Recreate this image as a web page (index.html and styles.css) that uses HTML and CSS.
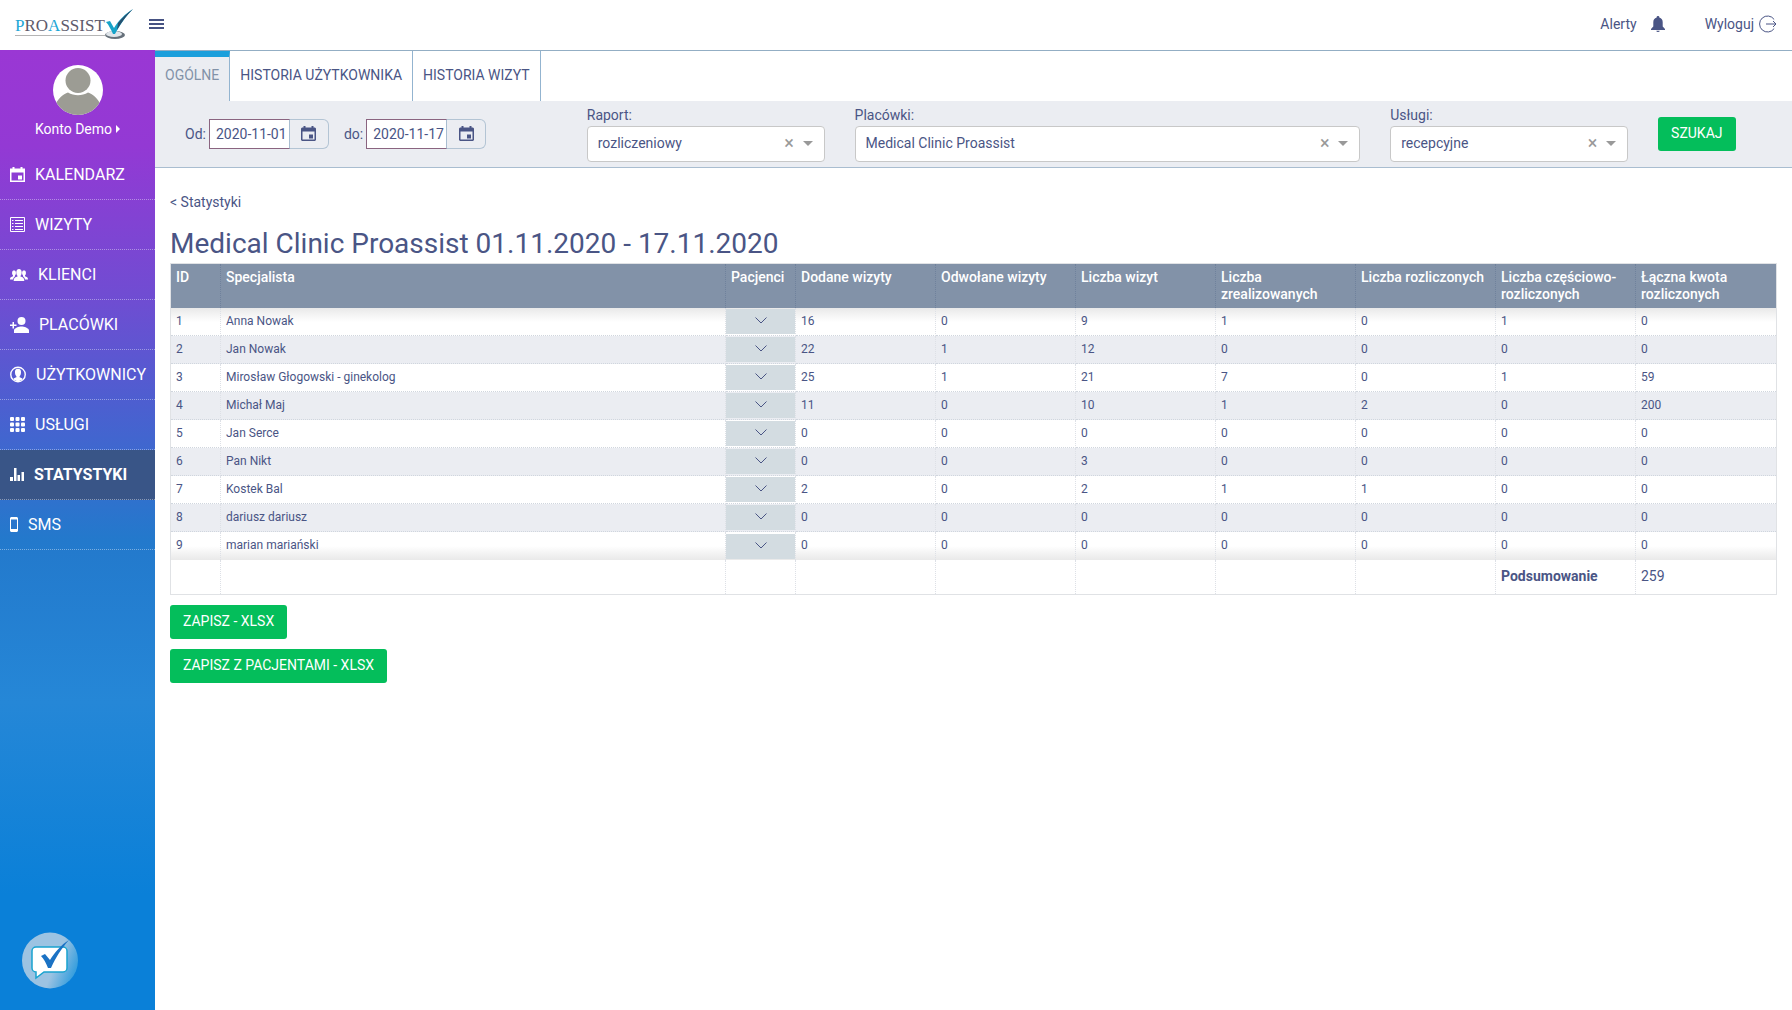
FILE: index.html
```html
<!DOCTYPE html>
<html lang="pl">
<head>
  <meta charset="UTF-8">
  <meta name="viewport" content="width=device-width, initial-scale=1.0">
  <title>Proassist - Statystyki</title>
  <link rel="stylesheet" href="styles.css">
</head>
<body>
  <header class="topbar">
    <a href="#" class="logo">
      <span class="logo-text"><span class="blue">P</span>RO<span class="blue">A</span>SSIST</span>
      <svg class="logo-mark" width="30" height="31" viewBox="0 0 30 31">
        <ellipse cx="11" cy="26" rx="10" ry="4" fill="#66707a"/>
        <ellipse cx="10" cy="25" rx="8" ry="3" fill="#dfe5ea"/>
        <path d="M2 13l4-1 4 7C15 11 21 5 29 0 21 8 16 16 11 25H9C7 21 5 16 2 13z" fill="#16a3c9"/>
        <path d="M14 14C18 9 23 4 29 0 22 7 17 14 13 21z" fill="#27506f"/>
      </svg>
    </a>
    <button class="menu-btn" aria-label="Menu"><span></span><span></span><span></span></button>
    <nav class="top-links">
      <a href="#">Alerty
        <svg class="bell" width="14" height="16" viewBox="0 0 14 16"><path d="M7 0a1.300 1.300 0 0 1 1.300 1.500C10.600 2 11.700 4 11.700 6.200V10.500L14 13v1H0v-1l2.300-2.500V6.200C2.300 4 3.400 2 5.700 1.500A1.300 1.300 0 0 1 7 0zM5.300 14.700h3.400a1.700 1.300 0 0 1-3.400 0z" fill="currentColor"/></svg>
      </a>
      <a href="#">Wyloguj
        <svg class="exit" width="18" height="18" viewBox="0 0 18 18" fill="none" stroke="currentColor"><path d="M15.200 4.500a8 8 0 1 0 0 9M7 9h10M14 6l3 3-3 3"/></svg>
      </a>
    </nav>
  </header>

  <div class="page">
    <aside class="sidebar">
      <div class="account">
        <svg width="50" height="50" viewBox="0 0 50 50">
          <clipPath id="face"><circle cx="25" cy="25" r="25"/></clipPath>
          <circle cx="25" cy="25" r="25" fill="#fff"/>
          <g clip-path="url(#face)" fill="#9c9c94"><circle cx="25" cy="15.500" r="12.500"/><path d="M2 40C5 34 10 29 15 27.500c6 3.500 14 3.500 20 0C40 29 45 34 48 40V50H2z"/></g>
        </svg>
        <button class="account-name">Konto Demo <svg width="4" height="8" viewBox="0 0 4 8"><path d="M0 0l4 4-4 4z" fill="#fff"/></svg></button>
      </div>
      <nav class="menu">
        <a href="#"><svg width="15" height="16" viewBox="0 0 15 16" fill="#fff"><path fill-rule="evenodd" d="M2.500 0h2v1.500h6V0h2v1.500H15V15H0V1.500h2.500zM1.500 5.500v8h12v-8z"/><path d="M8 8.500h4v4H8z"/></svg>KALENDARZ</a>
        <a href="#"><svg width="15" height="15" viewBox="0 0 15 15" fill="none" stroke="#fff"><path d="M.5.5h14v14H.5zM5 3.500h8M5 6.500h8M5 9.500h8M5 12.500h8M2 3.500h1.500M2 6.500h1.500M2 9.500h1.500M2 12.500h1.500"/></svg>WIZYTY</a>
        <a href="#"><svg width="18" height="12" viewBox="0 0 18 12" fill="#fff"><ellipse cx="9" cy="3.500" rx="2.700" ry="3.500"/><path d="M7.500 6h3v1.500c2 .8 3.800 1 3.800 4.500H3.700c0-3.500 1.800-3.700 3.800-4.500z"/><ellipse cx="4" cy="4" rx="2" ry="2.700"/><path d="M3 6h2v1.200L3.500 9 3 10.500H0C0 8 1.500 8 3 7.300z"/><ellipse cx="14" cy="4" rx="2" ry="2.700"/><path d="M15 6h-2v1.200L14.500 9l.5 1.500h3C18 8 16.500 8 15 7.300z"/></svg>KLIENCI</a>
        <a href="#"><svg width="19" height="16" viewBox="0 0 19 16" fill="#fff"><circle cx="11.500" cy="4" r="4"/><path d="M4 16v-2.500c0-2.500 5-4 7.500-4s7.500 1.500 7.500 4V16zM2.500 5h1.500v2.500h2.500V9H4v2.500H2.500V9H0V7.500h2.500z"/></svg>PLACÓWKI</a>
        <a href="#"><svg width="16" height="17" viewBox="0 0 17 17"><circle cx="8.500" cy="8.500" r="7.700" fill="none" stroke="#fff" stroke-width="1.500"/><path d="M8.500 2.500c2.500 0 3.300 1.500 3.200 3.500 0 2-.6 3.500-1.500 4.300v1.200c1 .5 2.500.8 3.200 1.700-2.500 3-7.300 3-9.800 0 .7-.9 2.200-1.200 3.200-1.700v-1.200C5.900 9.500 5.300 8 5.300 6 5.200 4 6 2.500 8.500 2.500z" fill="#fff"/></svg>UŻYTKOWNICY</a>
        <a href="#"><svg width="15" height="15" viewBox="0 0 15 15" fill="#fff"><rect width="4" height="4" rx="1"/><rect x="5.500" width="4" height="4" rx="1"/><rect x="11" width="4" height="4" rx="1"/><rect y="5.500" width="4" height="4" rx="1"/><rect x="5.500" y="5.500" width="4" height="4" rx="1"/><rect x="11" y="5.500" width="4" height="4" rx="1"/><rect y="11" width="4" height="4" rx="1"/><rect x="5.500" y="11" width="4" height="4" rx="1"/><rect x="11" y="11" width="4" height="4" rx="1"/></svg>USŁUGI</a>
        <a href="#" class="active"><svg width="14" height="13" viewBox="0 0 14 13" fill="#fff"><path d="M0 9h3v4H0zM4 0h2.500v13H4zM7.500 7H10v6H7.500zM11.500 4H14v9h-2.500z"/></svg>STATYSTYKI</a>
        <a href="#"><svg width="8" height="15" viewBox="0 0 8 15" fill="#fff"><path fill-rule="evenodd" d="M1 0h6l1 1v13l-1 1H1l-1-1V1zM1 2.500v9.500h6V2.500z"/></svg>SMS</a>
      </nav>
      <button class="chat" aria-label="Czat">
        <svg width="56" height="57" viewBox="0 0 56 57">
          <defs>
            <linearGradient id="bubble" x1="0" y1="0.300" x2="1" y2="0.700">
              <stop offset="0.600" stop-color="#9cc3e2"/>
              <stop offset="1" stop-color="#2a9add"/>
            </linearGradient>
          </defs>
          <circle cx="28" cy="28.500" r="28" fill="url(#bubble)"/>
          <path d="M14 15h27a4 4 0 0 1 4 4v17a4 4 0 0 1-4 4H22l-8 6v-6a4 4 0 0 1-4-4V19a4 4 0 0 1 4-4z" fill="#fff" stroke="#18a3cf" stroke-width="1.500"/>
          <path d="M19 24l4-2 5 6C33 20 39 13 47 8 39 17 34 25 29 36h-3c-2-5-4-9-7-12z" fill="#1b72c4"/>
        </svg>
      </button>
    </aside>

    <main class="content">
      <nav class="tabs">
        <a href="#" class="active">OGÓLNE</a>
        <a href="#">HISTORIA UŻYTKOWNIKA</a>
        <a href="#">HISTORIA WIZYT</a>
      </nav>

      <form class="filters">
        <div class="col dates">
          <label for="from">Od:</label>
          <div class="date">
            <input type="text" id="from" value="2020-11-01">
            <button type="button" aria-label="Wybierz datę"><svg width="15" height="16" viewBox="0 0 15 16" fill="currentColor"><path fill-rule="evenodd" d="M2.500 0h2v1.500h6V0h2v1.500H14l1 1V14l-1 1H1l-1-1V2.500l1-1h1.500zM1.500 5.500v8h12v-8z"/><path d="M8 8.500h4v4H8z"/></svg></button>
          </div>
          <label for="to">do:</label>
          <div class="date">
            <input type="text" id="to" value="2020-11-17">
            <button type="button" aria-label="Wybierz datę"><svg width="15" height="16" viewBox="0 0 15 16" fill="currentColor"><path fill-rule="evenodd" d="M2.500 0h2v1.500h6V0h2v1.500H14l1 1V14l-1 1H1l-1-1V2.500l1-1h1.500zM1.500 5.500v8h12v-8z"/><path d="M8 8.500h4v4H8z"/></svg></button>
          </div>
        </div>
        <div class="col">
          <label for="report">Raport:</label>
          <div class="select">
            <select id="report"><option>rozliczeniowy</option></select>
            <button type="button" class="clear" aria-label="Wyczyść">×</button>
            <span class="arrow"></span>
          </div>
        </div>
        <div class="col">
          <label for="clinics">Placówki:</label>
          <div class="select">
            <select id="clinics"><option>Medical Clinic Proassist</option></select>
            <button type="button" class="clear" aria-label="Wyczyść">×</button>
            <span class="arrow"></span>
          </div>
        </div>
        <div class="col">
          <label for="services">Usługi:</label>
          <div class="select">
            <select id="services"><option>recepcyjne</option></select>
            <button type="button" class="clear" aria-label="Wyczyść">×</button>
            <span class="arrow"></span>
          </div>
        </div>
        <div class="col search">
          <button type="button" class="btn">SZUKAJ</button>
        </div>
      </form>

      <section class="report">
        <a href="#" class="back">&lt; Statystyki</a>
        <h1>Medical Clinic Proassist 01.11.2020 - 17.11.2020</h1>
        <table>
          <colgroup>
            <col class="c-id"><col><col class="c-pac">
            <col class="c-num"><col class="c-num"><col class="c-num"><col class="c-num"><col class="c-num"><col class="c-num"><col class="c-num">
          </colgroup>
          <thead>
            <tr>
              <th>ID</th><th>Specjalista</th><th>Pacjenci</th><th>Dodane wizyty</th><th>Odwołane wizyty</th><th>Liczba wizyt</th><th>Liczba zrealizowanych</th><th>Liczba rozliczonych</th><th>Liczba częściowo-rozliczonych</th><th>Łączna kwota rozliczonych</th>
            </tr>
          </thead>
          <tbody id="rows"></tbody>
          <tfoot>
            <tr>
              <td></td><td></td><td></td><td></td><td></td><td></td><td></td><td></td><td><b>Podsumowanie</b></td><td>259</td>
            </tr>
          </tfoot>
        </table>
        <div class="export">
          <button class="btn">ZAPISZ - XLSX</button>
          <button class="btn">ZAPISZ Z PACJENTAMI - XLSX</button>
        </div>
      </section>
    </main>
  </div>

  <script>
    const specialists = [
      ['Anna Nowak', 16, 0, 9, 1, 0, 1, 0],
      ['Jan Nowak', 22, 1, 12, 0, 0, 0, 0],
      ['Mirosław Głogowski - ginekolog', 25, 1, 21, 7, 0, 1, 59],
      ['Michał Maj', 11, 0, 10, 1, 2, 0, 200],
      ['Jan Serce', 0, 0, 0, 0, 0, 0, 0],
      ['Pan Nikt', 0, 0, 3, 0, 0, 0, 0],
      ['Kostek Bal', 2, 0, 2, 1, 1, 0, 0],
      ['dariusz dariusz', 0, 0, 0, 0, 0, 0, 0],
      ['marian mariański', 0, 0, 0, 0, 0, 0, 0]
    ];

    const chevron = '<button class="expand" aria-label="Pacjenci"><svg width="12" height="7" viewBox="0 0 12 7" fill="none" stroke="currentColor"><path d="M.5.5L6 6 11.500.5"/></svg></button>';

    document.getElementById('rows').innerHTML = specialists.map(function(row, i) {
      const numbers = row.slice(1).map(n => `<td>${n}</td>`).join('');
      return `<tr><td>${i + 1}</td><td>${row[0]}</td><td class="pac">${chevron}</td>${numbers}</tr>`;
    }).join('');
  </script>
</body>
</html>
```
FILE: styles.css
```css
* {
  box-sizing: border-box;
}

body {
  margin: 0;
  min-height: 100vh;
  display: flex;
  flex-direction: column;
  font-family: Roboto, "Liberation Sans", sans-serif;
  font-size: 14px;
  line-height: 20px;
  color: #4a5585;
  background: #fff;
}

a {
  color: inherit;
  text-decoration: none;
}

button, input, select {
  font: inherit;
  color: inherit;
}

button {
  border: none;
  background: none;
  padding: 0;
  cursor: pointer;
}

svg {
  flex: none;
}

/* top bar */
.topbar {
  height: 50px;
  display: flex;
  align-items: center;
  padding: 0 15px 2px;
}

.logo {
  display: flex;
  align-items: center;
  width: 119px;
}

.logo-text {
  font-family: "Liberation Serif", serif;
  font-size: 17px;
  line-height: 18px;
  margin-top: 4px;
  color: #5d5a6b;
  border-bottom: 1px solid #b5b5b5;
}

.logo-text .blue {
  color: #1ba6d6;
}

.logo-mark {
  margin-left: -1px;
}

.menu-btn {
  width: 15px;
  margin-left: 15px;
  display: grid;
  gap: 2px;
}

.menu-btn span {
  height: 2px;
  background: #465282;
}

.top-links {
  margin-left: auto;
  display: flex;
  gap: 40px;
}

.top-links a {
  display: flex;
  align-items: center;
}

.bell {
  margin-left: 14px;
}

.exit {
  margin-left: 5px;
}

.page {
  flex: 1;
  display: flex;
}

/* sidebar */
.sidebar {
  width: 155px;
  flex: none;
  display: flex;
  flex-direction: column;
  color: #fff;
  background: linear-gradient(#9a37d4 0%, #9339d4 10%, #6f4dd2 26%, #4c5fd0 37%, #2379cc 51%, #2587d7 68%, #0a80d8 88%, #0a80d8 100%);
}

.account {
  height: 100px;
  padding-top: 15px;
  display: flex;
  flex-direction: column;
  align-items: center;
  gap: 4px;
}

.account-name {
  display: flex;
  align-items: center;
  gap: 4px;
}

.menu a {
  height: 50px;
  padding-left: 10px;
  display: flex;
  align-items: center;
  gap: 10px;
  font-size: 16px;
  border-bottom: 1px dotted rgba(255, 255, 255, 0.4);
}

.menu a.active {
  background: #395587;
  font-weight: bold;
}

.chat {
  margin: auto 0 21px 22px;
  width: 56px;
  height: 57px;
}

/* tabs */
.content {
  flex: 1;
  min-width: 0;
  border-top: 1px solid #93aec4;
}

.tabs {
  display: flex;
  height: 50px;
}

.tabs a {
  padding: 14px 10px 0;
  border-right: 1px solid #93b4d0;
}

.tabs a.active {
  padding-top: 8px;
  border-top: 6px solid #1b9fdc;
  background: #ebedf2;
  color: #8292a8;
}

/* filters */
.filters {
  display: grid;
  grid-template-columns: 3fr 2fr 4fr 2fr 1fr;
  padding: 4px 15px 5px;
  background: #ebedf2;
  border-bottom: 1px solid #a9bdd0;
}

.col {
  padding: 0 15px;
  min-width: 0;
}

.col > label {
  display: block;
}

.dates {
  display: flex;
  align-items: center;
  gap: 3px;
}

.date {
  display: flex;
  height: 30px;
}

.date + label {
  margin-left: 12px;
}

.date input {
  width: 81px;
  padding: 0 0 0 6px;
  background: #fff;
  border: 1px solid #8a6480;
  border-right: 1px solid #a9bdd0;
  border-radius: 0;
  outline: none;
}

.date button {
  width: 39px;
  display: flex;
  align-items: center;
  justify-content: center;
  border: 1px solid #b3c4d4;
  border-left: none;
  border-radius: 0 6px 6px 0;
}

.select {
  display: flex;
  align-items: center;
  height: 36px;
  margin-top: 1px;
  padding: 0 11px 2px 0;
  background: #fff;
  border: 1px solid #c8c8c8;
  border-radius: 4px;
}

.select select {
  flex: 1;
  min-width: 0;
  height: 32px;
  padding: 0 10px;
  border: none;
  background: none;
  appearance: none;
  outline: none;
}

.clear {
  width: 17px;
  font-size: 18px;
  color: #999;
}

.arrow {
  margin-left: 5px;
  border: 5px solid transparent;
  border-top-color: #999;
  border-bottom: none;
}

.search {
  display: flex;
  align-items: center;
}

.btn {
  height: 34px;
  padding: 0 13px 2px;
  background: #04be5b;
  color: #fff;
  border-radius: 3px;
  white-space: nowrap;
}

/* report */
.report {
  padding: 24px 15px;
}

.back {
  display: inline-block;
}

h1 {
  margin: 15px 0 2px;
  font-size: 28px;
  line-height: 34px;
  font-weight: normal;
}

table {
  width: 100%;
  table-layout: fixed;
  border-collapse: separate;
  border-spacing: 0;
  border: 1px solid #e0e2e5;
}

.c-id {
  width: 50px;
}

.c-pac {
  width: 70px;
}

.c-num {
  width: 140px;
}

th, td {
  text-align: left;
  padding: 0 5px;
  border-right: 1px dotted #dde0e6;
}

th:last-child, td:last-child {
  border-right: none;
}

th {
  height: 44px;
  padding-top: 5px;
  vertical-align: top;
  line-height: 17px;
  font-weight: 500;
  color: #fff;
  background: #8292a8;
  border-right-color: #6f819c;
}

tbody td {
  height: 28px;
  padding-bottom: 2px;
  font-size: 12px;
  border-bottom: 1px dotted #d0d6de;
}

tbody tr:nth-child(even) {
  background: #ebedf2;
}

tbody tr:first-child {
  background: linear-gradient(#e9e9e9, #fff 14px);
}

tbody tr:last-child {
  background: linear-gradient(#fff 14px, #e9e9e9);
}

tbody tr:last-child td {
  border-bottom: none;
}

td.pac {
  padding: 0;
}

.expand {
  width: 100%;
  height: 25px;
  padding-bottom: 2px;
  display: flex;
  align-items: center;
  justify-content: center;
  background: #d3dce1;
}

tfoot td {
  height: 34px;
  padding-bottom: 3px;
}

.export {
  margin-top: 10px;
  display: flex;
  flex-direction: column;
  align-items: flex-start;
  gap: 10px;
}
```
